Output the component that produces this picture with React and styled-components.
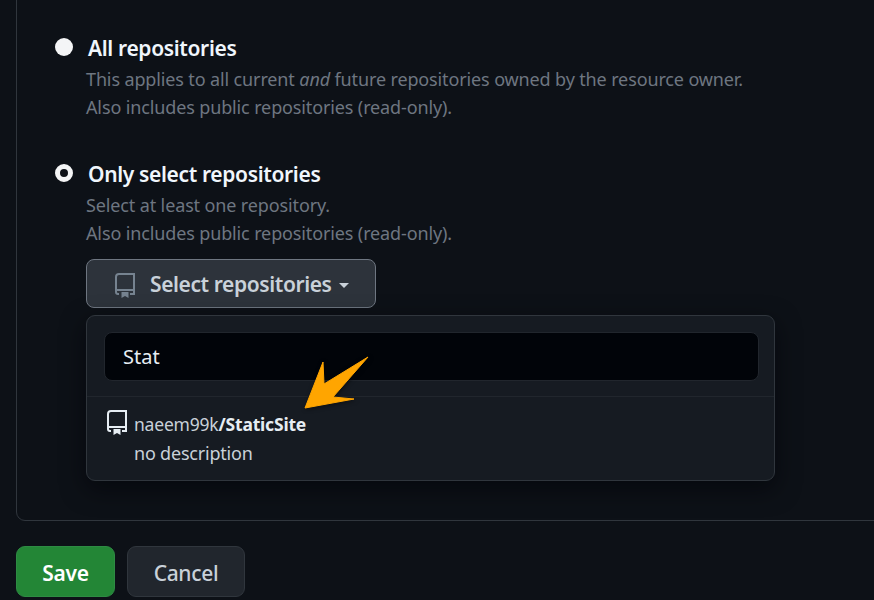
import React from "react";
import styled, { createGlobalStyle } from "styled-components";

const GlobalStyle = createGlobalStyle`
    html, body {
        margin: 0;
        height: 600px;
        overflow: hidden;
        background: #0d1117;
        font-family: "Noto Sans", "Open Sans", sans-serif;
    }
`;

const Page = styled.div`
    width: 874px;
    height: 600px;
    overflow: hidden;
    position: relative;
`;

const Frame = styled.div`
    box-sizing: border-box;
    width: 900px;
    height: 562px;
    margin: -41px 0 0 16px;
    padding: 73px 0 0 38px;
    border: 1px solid #30363d;
    border-radius: 9px;
`;

const Option = styled.div`
    display: flex;
    gap: 14px;
    margin-bottom: ${props => props.$gap || 0}px;
`;

const Radio = styled.span`
    flex: none;
    box-sizing: border-box;
    width: 18px;
    height: 18px;
    margin-top: 5px;
    border-radius: 50%;
    background: ${props => (props.$checked ? "#0d1117" : "#f4f5f6")};
    border: ${props => (props.$checked ? "5px solid #f4f5f6" : "none")};
`;

const OptionBody = styled.div`
    display: flex;
    flex-direction: column;
    margin-left: 1px;
`;

const Title = styled.div`
    font-size: 21px;
    line-height: 30px;
    font-weight: 600;
    color: #f0f6fc;
    letter-spacing: -0.35px;
`;

const Note = styled.div`
    font-size: 18px;
    line-height: 27.5px;
    color: #6e7681;
    margin-left: -2px;
    letter-spacing: -0.13px;
    &:nth-of-type(2) {
        margin-top: 3px;
    }
`;

const SelectButton = styled.button`
    box-sizing: border-box;
    display: flex;
    align-items: center;
    width: 290px;
    height: 49px;
    margin: 12px 0 0 -2px;
    padding: 1px 0 0 28px;
    background: #2d333b;
    border: 1.5px solid #6e7681;
    border-radius: 8px;
    color: #c9d1d9;
    font: 600 21px "Noto Sans", sans-serif;
    letter-spacing: -0.4px;
`;

const RepoGlyph = styled.svg`
    flex: none;
    width: 20px;
    height: 25px;
    margin-top: ${props => props.$lift || 0}px;
    fill: none;
    stroke: ${props => props.$color};
    stroke-width: 2;
`;

const Caret = styled.span`
    width: 0;
    height: 0;
    margin: 3px 0 0 7px;
    border-left: 5.5px solid transparent;
    border-right: 5.5px solid transparent;
    border-top: 5.5px solid #c9d1d9;
`;

const ButtonLabel = styled.span`
    margin-left: 15px;
`;

const Dropdown = styled.div`
    box-sizing: border-box;
    width: 689px;
    height: 166px;
    margin: 7px 0 0 -2px;
    background: #161b22;
    border: 1px solid #30363d;
    border-radius: 9px;
    box-shadow: 0 8px 24px rgba(1, 4, 9, 0.6);
`;

const SearchWrap = styled.div`
    padding: 16px 15px 15px 17px;
    border-bottom: 1px solid #21262d;
`;

const SearchField = styled.div`
    box-sizing: border-box;
    height: 49px;
    padding-left: 18px;
    display: flex;
    align-items: center;
    background: #010409;
    border: 1px solid #21262d;
    border-radius: 8px;
    color: #e6edf3;
    font-size: 20px;
`;

const RepoRow = styled.div`
    display: flex;
    gap: 7px;
    padding: 13px 0 0 20px;
`;

const RepoText = styled.div`
    display: flex;
    flex-direction: column;
    font-size: 18px;
    line-height: 29px;
    color: #c9d1d9;
    letter-spacing: -0.2px;
`;

const RepoName = styled.div`
    font-size: 17.5px;
    strong {
        font-weight: 700;
        color: #e6edf3;
    }
`;

const Arrow = styled.svg`
    position: absolute;
    left: 300px;
    top: 352px;
    width: 74px;
    height: 62px;
    filter: drop-shadow(1px 1px 2px rgba(0, 0, 0, 0.5));
`;

const Actions = styled.div`
    display: flex;
    gap: 12px;
    margin: 25px 0 0 16px;
`;

const ActionButton = styled.button`
    box-sizing: border-box;
    width: ${props => props.$width}px;
    height: 51px;
    padding-top: 4px;
    border-radius: 9px;
    border: 1px solid ${props => (props.$primary ? "#2e8b43" : "#30363d")};
    background: ${props => (props.$primary ? "#238636" : "#21262d")};
    color: ${props => (props.$primary ? "#ffffff" : "#c9d1d9")};
    font: ${props => (props.$primary ? 600 : 500)} 21px "Noto Sans", sans-serif;
    letter-spacing: -0.3px;
`;

const RepoIcon = ({ color, lift }) => (
    <RepoGlyph $color={color} $lift={lift} viewBox="0 0 20 25">
        <path d="M1 19V4a3 3 0 0 1 3-3h15v20h-4M1 19a2 2 0 0 0 2 2h1M1 17h18" />
        <path d="M6.5 19h7v6l-3.5-2-3.5 2Z" fill={color} stroke="none" />
    </RepoGlyph>
);

export default function App() {
    return (
        <Page>
            <GlobalStyle />
            <Frame>
                <Option $gap={38}>
                    <Radio />
                    <OptionBody>
                        <Title>All repositories</Title>
                        <Note>This applies to all current <em>and</em> future repositories owned by the resource owner.</Note>
                        <Note>Also includes public repositories (read-only).</Note>
                    </OptionBody>
                </Option>
                <Option>
                    <Radio $checked />
                    <OptionBody>
                        <Title>Only select repositories</Title>
                        <Note>Select at least one repository.</Note>
                        <Note>Also includes public repositories (read-only).</Note>
                        <SelectButton>
                            <RepoIcon color="#768390" lift={2} />
                            <ButtonLabel>Select repositories</ButtonLabel>
                            <Caret />
                        </SelectButton>
                        <Dropdown>
                            <SearchWrap>
                                <SearchField>Stat</SearchField>
                            </SearchWrap>
                            <RepoRow>
                                <RepoIcon color="#e6edf3" />
                                <RepoText>
                                    <RepoName>naeem99k<strong>/StaticSite</strong></RepoName>
                                    <div>no description</div>
                                </RepoText>
                            </RepoRow>
                        </Dropdown>
                    </OptionBody>
                </Option>
            </Frame>
            <Actions>
                <ActionButton $primary $width={99}>Save</ActionButton>
                <ActionButton $width={118}>Cancel</ActionButton>
            </Actions>
            <Arrow viewBox="0 0 74 62">
                <polygon points="5,56 23,10 24,32 68,5 33,45 54,47" fill="#ffa500" stroke="#ffa500" strokeWidth="1" strokeLinejoin="round" />
            </Arrow>
        </Page>
    );
}
